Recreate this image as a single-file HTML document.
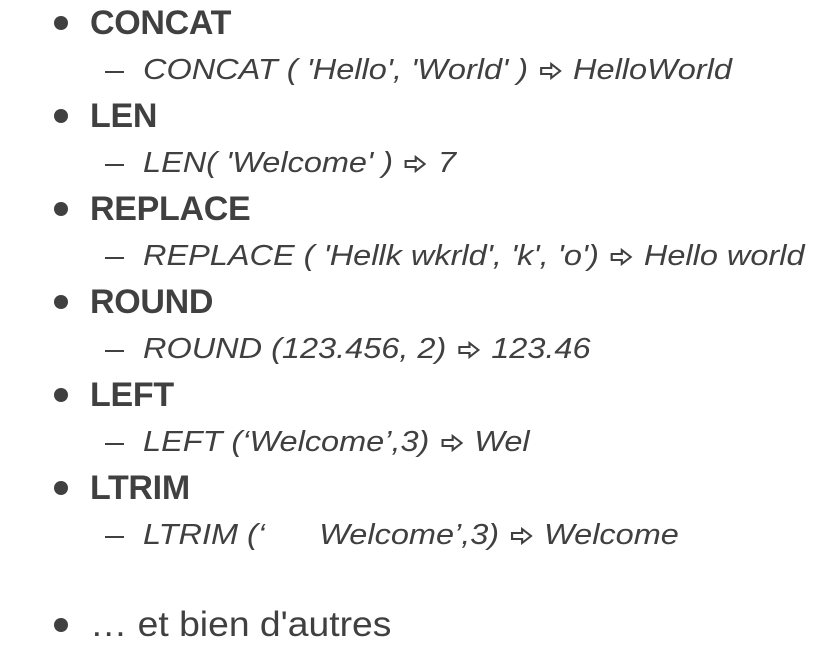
<!DOCTYPE html>
<html><head><meta charset="utf-8"><style>
html,body{margin:0;padding:0;background:#fff;width:840px;height:648px;overflow:hidden}
body{position:relative;font-family:"Liberation Sans",sans-serif;color:#404040}
.h{position:absolute;left:90px;font-size:34px;font-weight:bold;line-height:1;letter-spacing:-0.3px}
.b{position:absolute;left:54px;width:14px;height:14px;border-radius:50%;background:#404040}
.s{position:absolute;left:143px;font-size:29px;font-style:italic;line-height:1;white-space:pre;transform:scaleX(1.12);transform-origin:0 0}
.d{position:absolute;left:105px;width:19px;height:2px;background:#404040}
.a{display:inline-block;width:20px;height:18px;vertical-align:-1px;margin:0 2px}
.last{position:absolute;left:90px;font-size:35px;line-height:1;transform:scaleX(1.065);transform-origin:0 0}
</style></head><body>
<svg width="0" height="0" style="position:absolute"><defs><symbol id="ar" viewBox="0 0 20 18"><path d="M1.5 6h9V2l8 7-8 7v-4h-9z" fill="none" stroke="#404040" stroke-width="1.9" stroke-linejoin="miter"/></symbol></defs></svg>

<div class="b" style="top:16px"></div><div class="h" style="top:6px">CONCAT</div>
<div class="d" style="top:71px"></div><div class="s" style="top:56px">CONCAT ( 'Hello', 'World' ) <svg class="a"><use href="#ar"/></svg> HelloWorld</div>

<div class="b" style="top:109px"></div><div class="h" style="top:99px">LEN</div>
<div class="d" style="top:164px"></div><div class="s" style="top:149px">LEN( 'Welcome' ) <svg class="a"><use href="#ar"/></svg> 7</div>

<div class="b" style="top:202px"></div><div class="h" style="top:192px">REPLACE</div>
<div class="d" style="top:257px"></div><div class="s" style="top:242px">REPLACE ( 'Hellk wkrld', 'k', 'o') <svg class="a"><use href="#ar"/></svg> Hello world</div>

<div class="b" style="top:295px"></div><div class="h" style="top:285px">ROUND</div>
<div class="d" style="top:350px"></div><div class="s" style="top:335px">ROUND (123.456, 2) <svg class="a"><use href="#ar"/></svg> 123.46</div>

<div class="b" style="top:388px"></div><div class="h" style="top:378px">LEFT</div>
<div class="d" style="top:443px"></div><div class="s" style="top:428px">LEFT (‘Welcome’,3) <svg class="a"><use href="#ar"/></svg> Wel</div>

<div class="b" style="top:481px"></div><div class="h" style="top:471px">LTRIM</div>
<div class="d" style="top:536px"></div><div class="s" style="top:521px">LTRIM (‘      Welcome’,3) <svg class="a"><use href="#ar"/></svg> Welcome</div>

<div class="b" style="top:618px"></div><div class="last" style="top:607px">… et bien d'autres</div>
</body></html>
